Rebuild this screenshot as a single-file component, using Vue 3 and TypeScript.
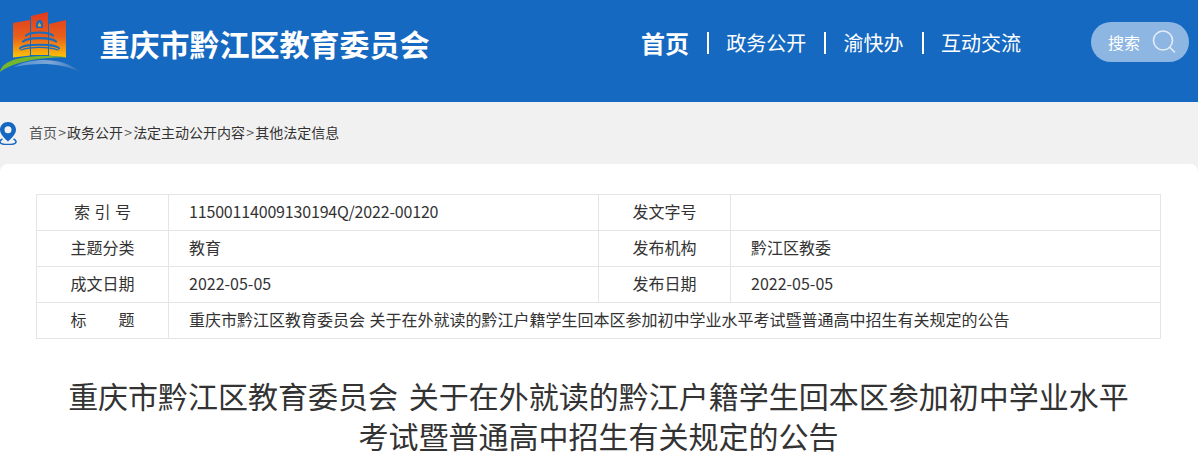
<script setup lang="ts">
interface NavItem {
  label: string
  active?: boolean
}

interface MetaRow {
  label: string
  value: string
  label2?: string
  value2?: string
  tight?: boolean
}

const docTitle = '重庆市黔江区教育委员会 关于在外就读的黔江户籍学生回本区参加初中学业水平考试暨普通高中招生有关规定的公告'

const navItems: NavItem[] = [
  { label: '首页', active: true },
  { label: '政务公开' },
  { label: '渝快办' },
  { label: '互动交流' },
]

const crumbs: string[] = ['首页', '政务公开', '法定主动公开内容', '其他法定信息']

const metaRows: MetaRow[] = [
  { label: '索 引 号', value: '11500114009130194Q/2022-00120', label2: '发文字号', value2: '', tight: true },
  { label: '主题分类', value: '教育', label2: '发布机构', value2: '黔江区教委' },
  { label: '成文日期', value: '2022-05-05', label2: '发布日期', value2: '2022-05-05' },
  { label: '标　　题', value: docTitle },
]
</script>

<template>
  <div class="page">
    <header class="header">
      <svg class="logo" width="82" height="74" viewBox="0 0 82 74">
        <defs>
          <linearGradient id="bld" x1="0" y1="0" x2="0" y2="1">
            <stop offset="0" stop-color="#e03a1e" />
            <stop offset="0.55" stop-color="#e8601c" />
            <stop offset="1" stop-color="#fdc408" />
          </linearGradient>
          <linearGradient id="swoosh" x1="0" y1="0" x2="1" y2="0">
            <stop offset="0" stop-color="#4f8fd0" />
            <stop offset="0.55" stop-color="#7ea8d6" />
            <stop offset="1" stop-color="#2b70bb" />
          </linearGradient>
        </defs>
        <path d="M13 23 30 20V55.500L13 57.500Z M31 16 48 12V55H31Z M49 24 66 20V57.500L49 55.500Z" fill="url(#bld)" />
        <path d="M36 28V25C36 21 38 20 39.500 20S43 21 43 25V28Z" fill="#1a6cc0" />
        <path d="M39.500 22.500 41 25V26.500H38V25Z" fill="#f0a020" />
        <g fill="none" stroke="#1a6cc0" stroke-linecap="round">
          <path d="M26 35.500C31 31.500 48 31.500 53 35.500" stroke-width="2.200" />
          <path d="M23 41.500C28 37 51 37 56 41.500" stroke-width="2.200" />
          <path d="M20 48.500C22 43.500 57 43.500 59 48.500" stroke-width="2" />
          <path d="M21 50C30 46.500 49 46.500 58 50" stroke-width="1.200" />
        </g>
        <path d="M0 72C2 60 24 53.500 66 57C38 57.500 13 62 0 72Z" fill="#74b72a" />
        <path d="M14 67C30 58 62 56 80 72C62 63 38 62 14 67Z" fill="url(#swoosh)" />
      </svg>
      <h1 class="site-name">重庆市黔江区教育委员会</h1>
      <nav class="nav">
        <template v-for="(item, i) in navItems" :key="item.label">
          <span v-if="i > 0" class="nav-sep"></span>
          <a class="nav-link" :class="{ active: item.active }">{{ item.label }}</a>
        </template>
      </nav>
      <div class="search">
        <span>搜索</span>
        <svg width="26" height="26" viewBox="0 0 26 26" fill="none" stroke="#e3edf8" stroke-width="1.600">
          <circle cx="12" cy="11.500" r="9.500" />
          <path d="M19 18.500 23.500 23" stroke-linecap="round" />
        </svg>
      </div>
    </header>

    <div class="crumb-bar">
      <svg class="pin" width="18" height="24" viewBox="0 0 18 24">
        <path fill-rule="evenodd" d="M9 1C4.400 1 1 4.500 1 8.800 1 13 5.500 17.500 9 20.500 12.500 17.500 17 13 17 8.800 17 4.500 13.600 1 9 1ZM9 5.200A3.500 3.500 0 1 1 9 12.200 3.500 3.500 0 0 1 9 5.200Z" fill="#1468c2" />
        <path d="M3.500 18C1 19 .5 21 1.500 22S5 23.500 9 23.500 15.500 23 16.500 22 17 19 14.500 18" fill="none" stroke="#1468c2" stroke-width="1.500" />
      </svg>
      <div class="crumbs">
        <template v-for="(c, i) in crumbs" :key="c">
          <span v-if="i > 0" class="gt">&gt;</span><a :class="{ home: i === 0 }">{{ c }}</a>
        </template>
      </div>
    </div>

    <main class="card">
      <table class="meta">
        <colgroup>
          <col class="c1" />
          <col class="c2" />
          <col class="c3" />
          <col />
        </colgroup>
        <tbody>
          <tr v-for="row in metaRows" :key="row.label">
            <th>{{ row.label }}</th>
            <td :class="{ tight: row.tight }" :colspan="row.label2 ? 1 : 3">{{ row.value }}</td>
            <template v-if="row.label2">
              <th>{{ row.label2 }}</th>
              <td>{{ row.value2 }}</td>
            </template>
          </tr>
        </tbody>
      </table>
      <h2 class="doc-title">{{ docTitle }}</h2>
    </main>
  </div>
</template>

<style>
html,
body {
  margin: 0;
  background: #f1f1f1;
  overflow: hidden;
}
</style>

<style scoped>
.page {
  width: 1198px;
  height: 464px;
  overflow: hidden;
  font-family: "Noto Sans CJK SC", "Noto Sans", sans-serif;
  color: #333;
}
.header {
  height: 102px;
  background: #1569c1;
  display: flex;
  align-items: flex-start;
  color: #fff;
}
.logo {
  flex: none;
  display: block;
}
.site-name {
  margin: 22px 0 0 17.500px;
  font-size: 30px;
  line-height: 42px;
  font-weight: 700;
  width: 329.500px;
  white-space: nowrap;
}
.nav {
  margin: 27px 0 0 212px;
  height: 32px;
  display: flex;
  align-items: center;
}
.nav-link {
  font-size: 20px;
  line-height: 32px;
  white-space: nowrap;
}
.nav-link.active {
  font-size: 24px;
  font-weight: 700;
}
.nav-sep {
  width: 2px;
  height: 22px;
  margin: 0 17.300px 0 18px;
  background: #fff;
}
.search {
  margin: 22px 0 0 70px;
  width: 98px;
  height: 40px;
  box-sizing: border-box;
  padding: 0 12px 0 17px;
  border-radius: 20px;
  background: #8db6e3;
  display: flex;
  align-items: center;
  justify-content: space-between;
  font-size: 16px;
}
.crumb-bar {
  height: 62px;
  background: #f1f1f1;
  display: flex;
  align-items: center;
  font-size: 14px;
}
.pin {
  flex: none;
  margin-left: -1px;
}
.crumbs {
  margin: 0 0 2px 12px;
  white-space: nowrap;
  color: #333;
}
.crumbs .home {
  color: #555;
}
.gt {
  color: #555;
  margin: 0 1.150px;
}
.card {
  background: #fff;
  border-radius: 8px 8px 0 0;
  padding: 30px 37px 0 36px;
  height: 300px;
}
.meta {
  width: 1125px;
  table-layout: fixed;
  border-collapse: collapse;
  font-size: 16px;
  word-spacing: 1px;
}
.c1 {
  width: 132px;
}
.c2 {
  width: 430px;
}
.c3 {
  width: 132px;
}
.meta th,
.meta td {
  height: 36px;
  padding: 0 0 3px;
  box-sizing: border-box;
  border: 1px solid #e5e5e5;
  font-weight: 400;
  white-space: nowrap;
  overflow: hidden;
}
.meta th {
  text-align: center;
}
.meta td {
  padding-left: 20px;
}
.meta td.tight {
  letter-spacing: -0.170px;
}
.doc-title {
  margin: 36px 0 0;
  padding: 0 32px;
  font-size: 30px;
  line-height: 40px;
  font-weight: 400;
  word-spacing: 4px;
  text-align: center;
  color: #333;
}
</style>
